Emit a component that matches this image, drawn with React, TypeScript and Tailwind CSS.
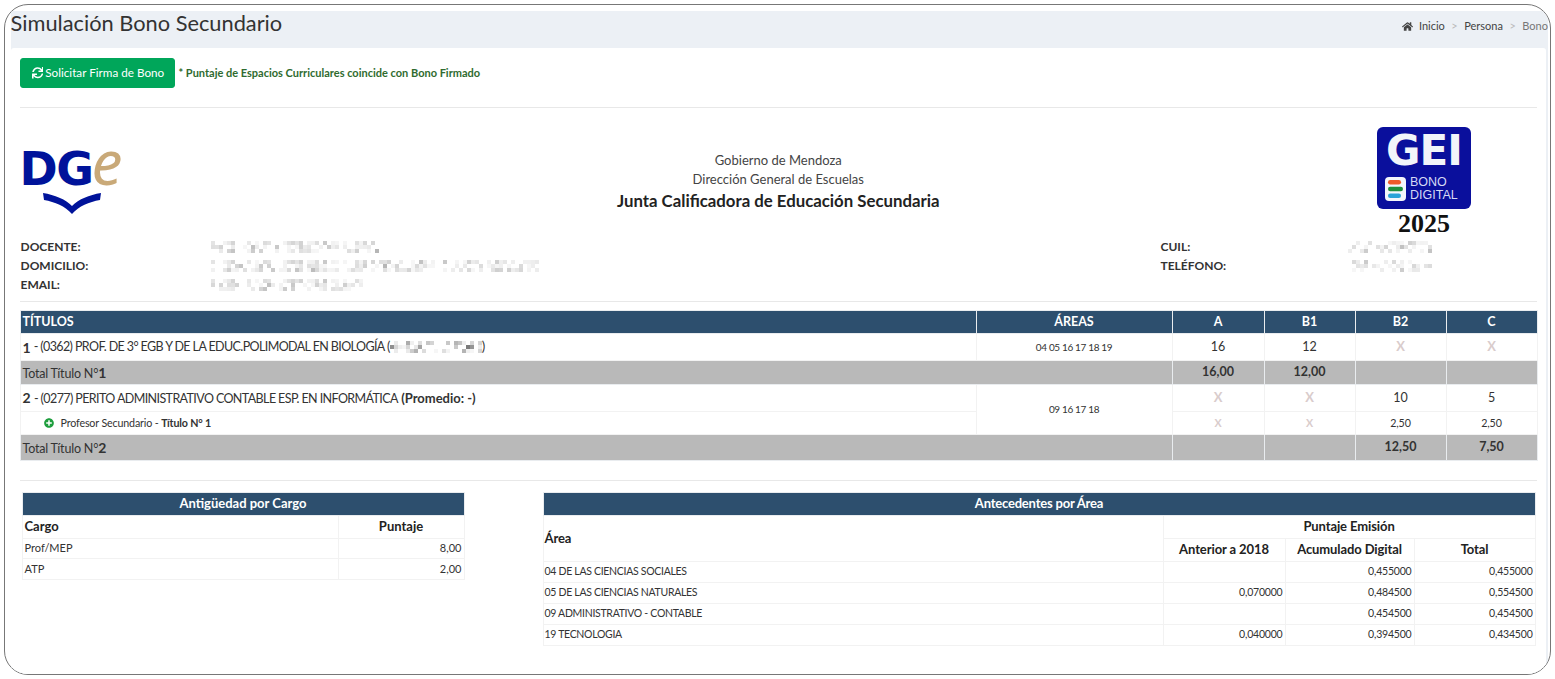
import { FaHome, FaPlusCircle, FaSync } from "react-icons/fa";

const FONT = "font-['Lato','Noto_Sans',sans-serif]";

/* Redacted text in the source is a mosaic of pale pixels. Seeded so it draws the same every run. */
function Redacted({ width, rows = 3, seed = 7, cell = 4, strength = 0.25 }: { width: number; rows?: number; seed?: number; cell?: number; strength?: number }) {
  const cols = Math.floor(width / cell);
  let s = seed;
  const next = () => {
    s = (s * 9301 + 49297) % 233280;
    return s / 233280;
  };
  const cells: { x: number; y: number; o: number }[] = [];
  for (let y = 0; y < rows; y++) {
    for (let x = 0; x < cols; x++) {
      const v = next();
      if (v > 0.5) cells.push({ x: x * cell, y: y * cell + 1, o: 0.05 + next() * next() * strength * 1.6 });
    }
  }
  return (
    <svg width={width} height={rows * cell + 2} className="block blur-[0.6px]" aria-hidden="true">
      {cells.map((c) => (
        <rect key={`${c.x}-${c.y}`} x={c.x} y={c.y} width={cell} height={cell} fill="#555" opacity={c.o} />
      ))}
    </svg>
  );
}

function DgeLogo() {
  return (
    <div className="w-[102px] flex flex-col">
      <div className="flex items-baseline h-[42px] leading-[42px]">
        <span className="font-['DejaVu_Sans',sans-serif] font-bold text-[#00139a] text-[46px] tracking-[-1.5px]">DG</span>
        <span className="font-['Noto_Sans',sans-serif] italic text-[#c9a978] text-[62px] ml-[-1px]">e</span>
      </div>
      <svg width="60" height="22" viewBox="0 0 60 22" className="mt-[10px] ml-[22px]">
        <path d="M1 1 C 13 3 23 7 30 14 C 37 7 47 3 59 1 L 58 8 C 47 10 37 14 30 22 C 23 14 13 10 2 8 Z" fill="#00139a" />
      </svg>
    </div>
  );
}

function GeiLogo() {
  return (
    <div className="w-[94px] flex flex-col items-center">
      <div className="w-[94px] h-[82px] rounded-[6px] bg-[#0a0f9c] px-[8px] pt-[2px]">
        <div className="font-['DejaVu_Sans',sans-serif] font-bold text-[#f2f5fa] text-[42px] leading-[44px] tracking-[-1px] text-center">GEI</div>
        <div className="flex items-center gap-[4px] mt-[3px]">
          <svg width="21" height="24" viewBox="0 0 21 24" aria-hidden="true">
            <rect width="21" height="24" rx="4" fill="#f4f6fb" />
            <rect x="3" y="3" width="13" height="4.5" rx="2.2" fill="#ef5a2a" />
            <rect x="3" y="9.7" width="15" height="4.5" rx="2.2" fill="#1f8f3c" />
            <rect x="3" y="16.5" width="13" height="4.5" rx="2.2" fill="#2aa3d8" />
          </svg>
          <div className="font-['Liberation_Sans',sans-serif] text-[#d5d9f5] text-[12.5px] leading-[12.5px]">
            BONO
            <br />
            DIGITAL
          </div>
        </div>
      </div>
      <div className="font-['Liberation_Serif',serif] font-bold text-[#111] text-[26px] leading-[30px]">2025</div>
    </div>
  );
}

const th = "bg-[#2d4f6e] text-white font-bold border border-[#e9ecef]";
const td = "border border-[#f2f2f2]";
const total = "bg-[#b9b9b9] border border-[#e9ecef] font-bold text-center text-[12.5px] text-[#333]";
const totalLabel = "bg-[#b9b9b9] pl-[2px] text-[12.5px] tracking-[-0.2px] text-[#333] border border-[#e9ecef]";
const ex = "text-[#d9cccc] font-bold text-center";
const caps = "text-[12.5px] tracking-[-0.6px]";
const areaCodes = "text-center text-[10px] tracking-[-0.35px]";
const num = "text-right pr-[2px] text-[10.5px] tracking-[-0.2px]";
const areaName = "pl-[1px] text-[10.5px] tracking-[-0.3px]";

function Titulos() {
  return (
    <table className="w-[1517px] table-fixed border-collapse text-[#333] text-[13px]">
      <colgroup>
        <col className="w-[956px]" />
        <col className="w-[196px]" />
        <col className="w-[92px]" />
        <col className="w-[91px]" />
        <col className="w-[91px]" />
        <col className="w-[91px]" />
      </colgroup>
      <thead>
        <tr className="h-[23px] text-[12.5px]">
          <th className={`${th} text-left pl-[2px]`}>TÍTULOS</th>
          <th className={th}>ÁREAS</th>
          <th className={th}>A</th>
          <th className={th}>B1</th>
          <th className={th}>B2</th>
          <th className={th}>C</th>
        </tr>
      </thead>
      <tbody>
        <tr className="h-[27px]">
          <td className={`${td} pl-[2px]`}>
            <div className="flex items-center">
              <b className="text-[14px] mr-[3px]">1</b>
              <span className={`${caps} whitespace-pre`}>- (0362) PROF. DE 3° EGB Y DE LA EDUC.POLIMODAL EN BIOLOGÍA (</span>
              <Redacted width={92} seed={31} strength={0.55} />)
            </div>
          </td>
          <td className={`${td} ${areaCodes}`}>04 05 16 17 18 19</td>
          <td className={`${td} text-center text-[12.5px]`}>16</td>
          <td className={`${td} text-center text-[12.5px]`}>12</td>
          <td className={`${td} ${ex}`}>X</td>
          <td className={`${td} ${ex}`}>X</td>
        </tr>
        <tr className="h-[24px]">
          <td colSpan={2} className={totalLabel}>
            Total Título N°<b className="text-[14px]">1</b>
          </td>
          <td className={total}>16,00</td>
          <td className={total}>12,00</td>
          <td className={total}></td>
          <td className={total}></td>
        </tr>
        <tr className="h-[27px]">
          <td className={`${td} pl-[2px]`}>
            <b className="text-[14px]">2</b> <span className={caps}>- (0277) PERITO ADMINISTRATIVO CONTABLE ESP. EN INFORMÁTICA</span> <b>(Promedio: -)</b>
          </td>
          <td rowSpan={2} className={`${td} ${areaCodes}`}>09 16 17 18</td>
          <td className={`${td} ${ex}`}>X</td>
          <td className={`${td} ${ex}`}>X</td>
          <td className={`${td} text-center text-[12.5px]`}>10</td>
          <td className={`${td} text-center text-[12.5px]`}>5</td>
        </tr>
        <tr className="h-[23px] text-[10.7px] tracking-[-0.15px]">
          <td className={`${td} pl-[23px]`}>
            <div className="flex items-center">
              <FaPlusCircle className="text-[#1e9e3e] text-[10px] mr-[7px]" />
              <span>Profesor Secundario - <b>Título N° 1</b></span>
            </div>
          </td>
          <td className={`${td} ${ex}`}>X</td>
          <td className={`${td} ${ex}`}>X</td>
          <td className={`${td} text-center`}>2,50</td>
          <td className={`${td} text-center`}>2,50</td>
        </tr>
        <tr className="h-[26px]">
          <td colSpan={2} className={totalLabel}>
            Total Título N°<b className="text-[14px]">2</b>
          </td>
          <td className={total}></td>
          <td className={total}></td>
          <td className={total}>12,50</td>
          <td className={total}>7,50</td>
        </tr>
      </tbody>
    </table>
  );
}

function Antiguedad() {
  return (
    <table className="w-[442px] table-fixed border-collapse text-[#333] text-[11px]">
      <colgroup>
        <col className="w-[316px]" />
        <col className="w-[126px]" />
      </colgroup>
      <thead>
        <tr className="h-[23px]">
          <th colSpan={2} className={`${th} text-[13px]`}>Antigüedad por Cargo</th>
        </tr>
        <tr className="h-[23px] text-[13px] text-[#222]">
          <th className={`${td} text-left pl-[2px]`}>Cargo</th>
          <th className={td}>Puntaje</th>
        </tr>
      </thead>
      <tbody>
        <tr className="h-[20px]">
          <td className={`${td} pl-[2px]`}>Prof/MEP</td>
          <td className={`${td} text-right pr-[2px]`}>8,00</td>
        </tr>
        <tr className="h-[21px]">
          <td className={`${td} pl-[2px]`}>ATP</td>
          <td className={`${td} text-right pr-[2px]`}>2,00</td>
        </tr>
      </tbody>
    </table>
  );
}

const AREAS = [
  { area: "04 DE LAS CIENCIAS SOCIALES", prev: "", acum: "0,455000", tot: "0,455000" },
  { area: "05 DE LAS CIENCIAS NATURALES", prev: "0,070000", acum: "0,484500", tot: "0,554500" },
  { area: "09 ADMINISTRATIVO - CONTABLE", prev: "", acum: "0,454500", tot: "0,454500" },
  { area: "19 TECNOLOGIA", prev: "0,040000", acum: "0,394500", tot: "0,434500" },
];

function Antecedentes() {
  return (
    <table className="w-[992px] table-fixed border-collapse text-[#333] text-[11px]">
      <colgroup>
        <col className="w-[620px]" />
        <col className="w-[122px]" />
        <col className="w-[129px]" />
        <col className="w-[121px]" />
      </colgroup>
      <thead>
        <tr className="h-[23px]">
          <th colSpan={4} className={`${th} text-[13px] tracking-[-0.2px]`}>Antecedentes por Área</th>
        </tr>
        <tr className="h-[23px] text-[13px] text-[#222] tracking-[-0.1px]">
          <th rowSpan={2} className={`${td} text-left pl-[1px]`}>Área</th>
          <th colSpan={3} className={td}>Puntaje Emisión</th>
        </tr>
        <tr className="h-[23px] text-[13px] text-[#222] tracking-[-0.1px]">
          <th className={td}>Anterior a 2018</th>
          <th className={td}>Acumulado Digital</th>
          <th className={td}>Total</th>
        </tr>
      </thead>
      <tbody>
        {AREAS.map((r) => (
          <tr key={r.area} className="h-[21px]">
            <td className={`${td} ${areaName}`}>{r.area}</td>
            <td className={`${td} ${num}`}>{r.prev}</td>
            <td className={`${td} ${num}`}>{r.acum}</td>
            <td className={`${td} ${num}`}>{r.tot}</td>
          </tr>
        ))}
      </tbody>
    </table>
  );
}

export default function App() {
  return (
    <div className={`${FONT} h-[679px] w-[1555px] bg-white p-[4px] overflow-hidden`}>
      <div className="h-[671px] rounded-[24px] border-[1.5px] border-[#777] overflow-hidden pt-[6px] pl-[5.5px] pr-[2px]">
        <div className="h-full bg-[#ecf0f5] flex flex-col">
          {/* page header */}
          <div className="h-[37px] flex items-start justify-between shrink-0">
            <h1 className="text-[21.8px] leading-[24px] text-[#333]">Simulación Bono Secundario</h1>
            <div className="flex items-center text-[11px] text-[#444] pt-[7px]">
              <FaHome className="text-[11px] mr-[6px]" />
              <span>Inicio</span>
              <span className="mx-[6.5px] text-[#bbb]">&gt;</span>
              <span>Persona</span>
              <span className="mx-[6.5px] text-[#bbb]">&gt;</span>
              <span className="text-[#777]">Bono</span>
            </div>
          </div>

          {/* card */}
          <div className="flex-1 bg-white rounded-[3px] mr-[2px] px-[9px]">
            <div className="flex items-start gap-[4px] pt-[10px] h-[60px] border-b border-[#e8e8e8]">
              <button type="button" className="h-[30px] w-[155px] pl-[2px] bg-[#00a65a] rounded-[3px] border border-[#00a65a] text-white text-[11.7px] flex items-center justify-center gap-[2px]">
                <FaSync className="text-[11.5px]" />
                Solicitar Firma de Bono
              </button>
              <span className="text-[11px] font-bold text-[#2f6b2f] mt-[7px]">* Puntaje de Espacios Curriculares coincide con Bono Firmado</span>
            </div>

            {/* letterhead */}
            <div className="grid grid-cols-3 h-[129px]">
              <div className="pt-[32px]">
                <DgeLogo />
              </div>
              <div className="text-center text-[#444] text-[13px] leading-[19px] pt-[43px]">
                <div>Gobierno de Mendoza</div>
                <div>Dirección General de Escuelas</div>
                <div className="font-bold text-[16.8px] text-[#222] leading-[23px]">Junta Calificadora de Educación Secundaria</div>
              </div>
              <div className="flex justify-end pr-[66px] pt-[19px]">
                <GeiLogo />
              </div>
            </div>

            {/* datos del docente */}
            <div className="flex text-[12px] font-bold text-[#333] leading-[19px] pb-[7px] pl-[1px] border-b border-[#e8e8e8]">
              <div className="grid grid-cols-[190px_1fr] w-[1140px] items-center">
                <span>DOCENTE:</span>
                <Redacted width={168} seed={11} />
                <span>DOMICILIO:</span>
                <Redacted width={328} seed={11} />
                <span>EMAIL:</span>
                <Redacted width={152} seed={11} />
              </div>
              <div className="grid grid-cols-[187px_1fr] items-center content-start">
                <span>CUIL:</span>
                <Redacted width={84} seed={53} />
                <span>TELÉFONO:</span>
                <Redacted width={84} seed={97} />
              </div>
            </div>

            <div className="mt-[8px] pb-[19px] border-b border-[#e8e8e8]">
              <Titulos />
            </div>

            <div className="flex items-start pt-[11px] pl-[2px]">
              <Antiguedad />
              <div className="ml-[78px]">
                <Antecedentes />
              </div>
            </div>
          </div>
        </div>
      </div>
    </div>
  );
}
